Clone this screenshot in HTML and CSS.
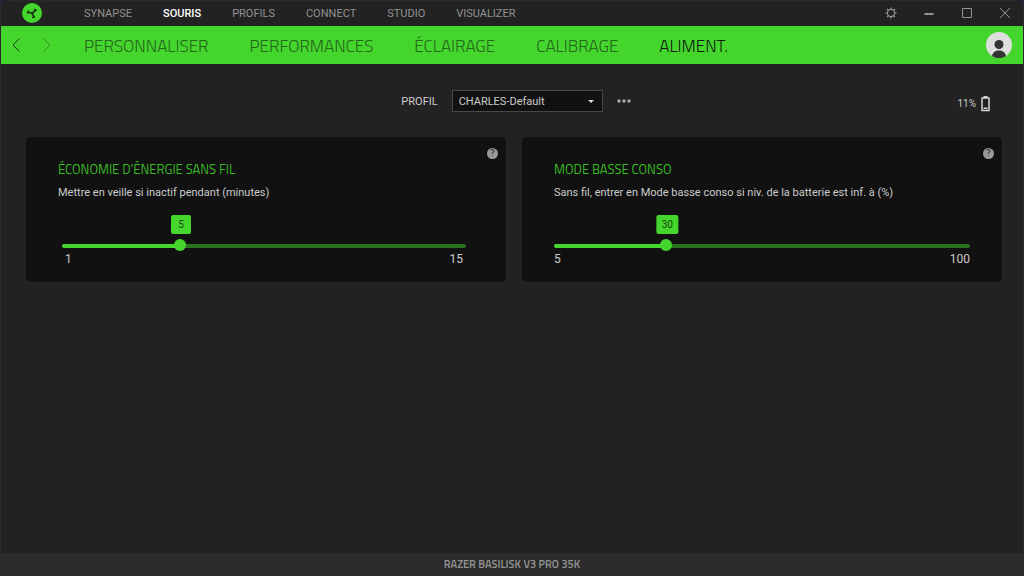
FILE: index.html
```html
<!DOCTYPE html>
<html lang="fr">
<head>
<meta charset="utf-8">
<meta name="viewport" content="width=device-width, initial-scale=1">
<title>Razer Synapse</title>
<link rel="stylesheet" href="styles.css">
</head>
<body>
<div class="window">
  <header class="titlebar">
    <svg class="logo" viewBox="0 0 20 20" aria-hidden="true">
      <circle cx="10" cy="10" r="10" fill="#44d62c"/>
      <g stroke="#17320f" fill="none" stroke-linecap="round">
        <path d="M10.300 10.300L6 9M10.300 10.300L13.500 7M10.300 10.300L11.800 14" stroke-width="1.800"/>
        <path d="M5.500 10.200L6 7.900M12.800 6.200L14.200 7.300M10.600 14.600L12.600 13.800" stroke-width="1.300"/>
      </g>
    </svg>
    <nav class="modules">
      <a href="#">SYNAPSE</a>
      <a href="#" class="active">SOURIS</a>
      <a href="#">PROFILS</a>
      <a href="#">CONNECT</a>
      <a href="#">STUDIO</a>
      <a href="#">VISUALIZER</a>
    </nav>
    <div class="controls">
      <button type="button" aria-label="Paramètres"><svg viewBox="0 0 12 12"><circle cx="6" cy="6" r="3.600" stroke-width="1.200"/><path d="M6 .4v2M6 9.600v2M.4 6h2M9.600 6h2M2 2l1.400 1.400M8.600 8.600l1.400 1.400M2 10l1.400-1.400M8.600 3.400l1.400-1.400" stroke-width="1.200"/></svg></button>
      <button type="button" aria-label="Réduire"><svg viewBox="0 0 12 12"><path d="M1.500 7h9" stroke-width="2"/></svg></button>
      <button type="button" aria-label="Agrandir"><svg viewBox="0 0 12 12"><path d="M1.500 1.500h9v9h-9z"/></svg></button>
      <button type="button" aria-label="Fermer"><svg viewBox="0 0 12 12"><path d="M1 1l10 10M11 1L1 11"/></svg></button>
    </div>
  </header>
  <div class="navbar">
    <div class="history">
      <button type="button" aria-label="Précédent"><svg viewBox="0 0 8 14"><path d="M7.500 .5L1 7l6.500 6.500"/></svg></button>
      <button type="button" aria-label="Suivant" disabled><svg viewBox="0 0 8 14"><path d="M.5 .5L7 7L.5 13.500"/></svg></button>
    </div>
    <nav class="sections">
      <a href="#">PERSONNALISER</a>
      <a href="#">PERFORMANCES</a>
      <a href="#">ÉCLAIRAGE</a>
      <a href="#">CALIBRAGE</a>
      <a href="#" class="active">ALIMENT.</a>
    </nav>
    <button type="button" class="avatar" aria-label="Compte">
      <svg viewBox="0 0 26 26"><circle cx="13" cy="13" r="13" fill="#dedede"/><circle cx="13" cy="12.500" r="4.500" fill="#333"/><path d="M6 24c.5-3.500 3.500-5.500 7-5.500s6.500 2 7 5.500a13 13 0 0 1-14 0z" fill="#333"/></svg>
    </button>
  </div>
  <main class="content">
    <div class="toolbar">
      <div class="profile">
        <label for="profile">PROFIL</label>
        <div class="select">
          <select id="profile"><option>CHARLES-Default</option></select>
          <svg viewBox="0 0 6 3" aria-hidden="true"><path d="M0 0h6L3 3z" fill="#ddd"/></svg>
        </div>
        <button type="button" class="more" aria-label="Plus"><svg viewBox="0 0 14 4"><circle cx="2" cy="2" r="1.700"/><circle cx="7" cy="2" r="1.700"/><circle cx="12" cy="2" r="1.700"/></svg></button>
      </div>
      <div class="battery"><span>11%</span>
        <svg viewBox="0 0 9 16" aria-hidden="true"><path d="M2.500 0h4v2h-4z" fill="#d4d4d4"/><path d="M1 2h7v12.500H1z" fill="none" stroke="#d4d4d4" stroke-width="1.500"/><path d="M2.500 11.500h4v1.500h-4z" fill="#d4d4d4"/></svg>
      </div>
    </div>
    <div class="cards">
      <section class="card">
        <button type="button" class="help" aria-label="Aide">?</button>
        <h2>ÉCONOMIE D'ÉNERGIE SANS FIL</h2>
        <label for="sleep">Mettre en veille si inactif pendant (minutes)</label>
        <div class="slider inset" style="--value: 0.2857">
          <output for="sleep">5</output>
          <input id="sleep" type="range" min="1" max="15" value="5">
          <div class="scale"><span>1</span><span>15</span></div>
        </div>
      </section>
      <section class="card">
        <button type="button" class="help" aria-label="Aide">?</button>
        <h2>MODE BASSE CONSO</h2>
        <label for="low">Sans fil, entrer en Mode basse conso si niv. de la batterie est inf. à (%)</label>
        <div class="slider" style="--value: 0.2632">
          <output for="low">30</output>
          <input id="low" type="range" min="5" max="100" value="30">
          <div class="scale"><span>5</span><span>100</span></div>
        </div>
      </section>
    </div>
  </main>
  <footer class="statusbar">RAZER BASILISK V3 PRO 35K</footer>
</div>
</body>
</html>
```
FILE: styles.css
```css
* { box-sizing: border-box; }
body { margin: 0; background: #25203a; color: #ccc; font: 11px/16px Roboto, sans-serif; }
button { display: block; padding: 0; border: 0; background: none; color: inherit; font: inherit; }
a { color: inherit; text-decoration: none; }
svg { display: block; }
.window { display: flex; flex-direction: column; min-height: 100vh; background: #222; border: 1px solid #2b2735; border-bottom-width: 0; border-radius: 5px 5px 0 0; }
.titlebar { display: flex; align-items: center; height: 25px; padding: 0 12px 1px 21px; color: #929292; }
.logo { width: 20px; height: 20px; margin-right: 42px; }
.modules { display: flex; gap: 31px; padding-top: 2px; }
.modules .active { color: #fff; font-weight: 500; }
.controls { display: flex; gap: 26px; margin-left: auto; }
.controls svg { width: 12px; height: 12px; fill: none; stroke: #929292; }
.navbar { display: flex; align-items: center; height: 38px; padding: 0 11px; background: #44d62c; }
.history { display: flex; gap: 23px; width: 72px; }
.history svg { width: 8px; height: 14px; fill: none; stroke: #193d14; }
.history :disabled { opacity: .4; }
.sections { display: flex; gap: 41px; padding-top: 2px; color: #26661c; font: 300 17px/24px "Titillium Web", Roboto, sans-serif; }
.sections .active { color: #101c0d; }
.avatar { margin-left: auto; }
.avatar svg { width: 26px; height: 26px; }
.content { flex: 1; padding: 26px 21px 26px 25px; }
.toolbar { display: grid; grid-template-columns: 1fr auto 1fr; align-items: start; height: 47px; }
.profile { grid-column: 2; display: flex; align-items: center; padding-left: 4px; }
.profile label { padding-top: 1px; margin-right: 14px; }
.select { display: flex; align-items: center; }
.select select { appearance: none; width: 151px; height: 22px; padding: 1px 24px 0 6px; border: 1px solid #484848; border-radius: 0; background: #111; color: #ccc; font: inherit; }
.select svg { width: 6px; height: 3px; margin-left: -15px; margin-right: 9px; pointer-events: none; }
.more { margin-left: 14px; }
.more svg { width: 14px; height: 4px; fill: #aaa; }
.battery { display: flex; align-items: center; justify-content: flex-end; gap: 5px; padding: 6px 12px 0 0; font-size: 10px; }
.battery svg { width: 9px; height: 16px; }
.cards { display: grid; grid-template-columns: 1fr 1fr; gap: 16px; }
.card { position: relative; padding: 24px 32px 15px; border-radius: 5px; background: #111; }
.card h2 { margin: 0 0 7px; color: #3bb927; font: 400 13px/17px "Titillium Web", Roboto, sans-serif; }
.card label { display: block; }
.help { position: absolute; top: 11px; right: 8px; width: 11px; height: 11px; border-radius: 50%; background: #999; color: #222; font: 9px/11px Roboto, sans-serif; text-align: center; }
.slider { position: relative; padding-top: 36px; }
.slider.inset { margin: 0 8px 0 4px; }
.slider output { position: absolute; top: 14px; left: calc(7px + (100% - 12px) * var(--value)); min-width: 20px; padding: 0 5px; transform: translateX(-50%); border-radius: 2px; background: #44d62c; color: #1b4714; font: 10px/19px Roboto, sans-serif; text-align: center; }
.slider input { appearance: none; display: block; width: 100%; height: 18px; margin: 0; background: none; }
.slider input::-webkit-slider-runnable-track { height: 4px; border-radius: 2px; background: linear-gradient(#44d62c, #44d62c) 0 0 / calc(6px + (100% - 12px) * var(--value)) 100% no-repeat #27741c; }
.slider input::-webkit-slider-thumb { appearance: none; width: 12px; height: 12px; margin-top: -5px; border-radius: 50%; background: #44d62c; }
.scale { display: flex; justify-content: space-between; margin-top: -4px; font-size: 12px; }
.inset .scale { padding: 0 3px; }
.statusbar { height: 23px; padding-top: 3px; background: #2b2b2b; color: #939393; font-family: "Titillium Web", Roboto, sans-serif; font-weight: 600; text-align: center; }
```
